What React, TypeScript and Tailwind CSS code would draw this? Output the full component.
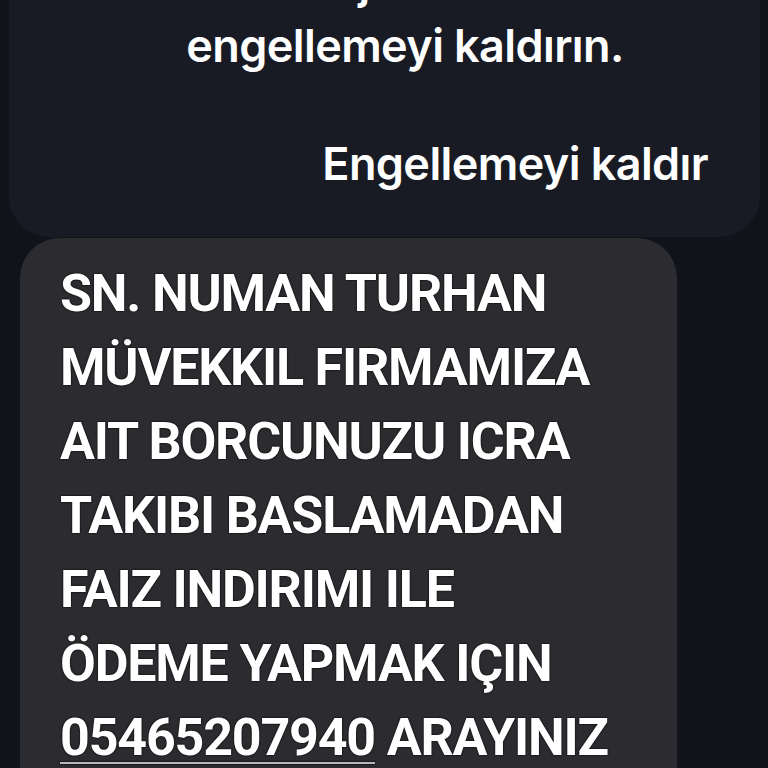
export default function App() {
  const lines = [
    "SN. NUMAN TURHAN",
    "MÜVEKKIL FIRMAMIZA",
    "AIT BORCUNUZU ICRA",
    "TAKIBI BASLAMADAN",
    "FAIZ INDIRIMI ILE",
    "ÖDEME YAPMAK IÇIN",
  ];

  return (
    <div className="w-[768px] h-[768px] overflow-hidden bg-[#10131a] font-['Inter',sans-serif]">
      {/* Blocked-number notice card */}
      <div className="ml-[9px] mr-[8px] -mt-[49px] h-[286px] rounded-b-[40px] bg-[#181b24] flex flex-col">
        <div className="pl-[60px] pr-[19px] text-center text-white text-[45px] font-semibold leading-[63px] tracking-[-0.6px]">
          <div className="pr-[60px]">mesaj almak</div>
          <div>engellemeyi kaldırın.</div>
        </div>
        <div className="mt-[64px] pr-[52px] text-right text-white text-[45px] font-semibold leading-[46px] tracking-[-0.6px]">
          Engellemeyi kaldır
        </div>
      </div>

      {/* Message bubble */}
      <div className="ml-[20px] w-[657px] mt-[1px] rounded-t-[40px] bg-[#2c2c30] pl-[40px] pt-[19px] pb-[40px] font-['Roboto',sans-serif] font-bold text-white text-[52px] leading-[74px] tracking-[-1.2px] [text-shadow:0_0_2px_#000,0_0_1px_#000]">
        {lines.map((l) => (
          <div key={l}>{l}</div>
        ))}
        <div>
          <span className="underline decoration-[#b8b8b8] decoration-2 underline-offset-[7px]">05465207940</span> ARAYINIZ
        </div>
      </div>
    </div>
  );
}
